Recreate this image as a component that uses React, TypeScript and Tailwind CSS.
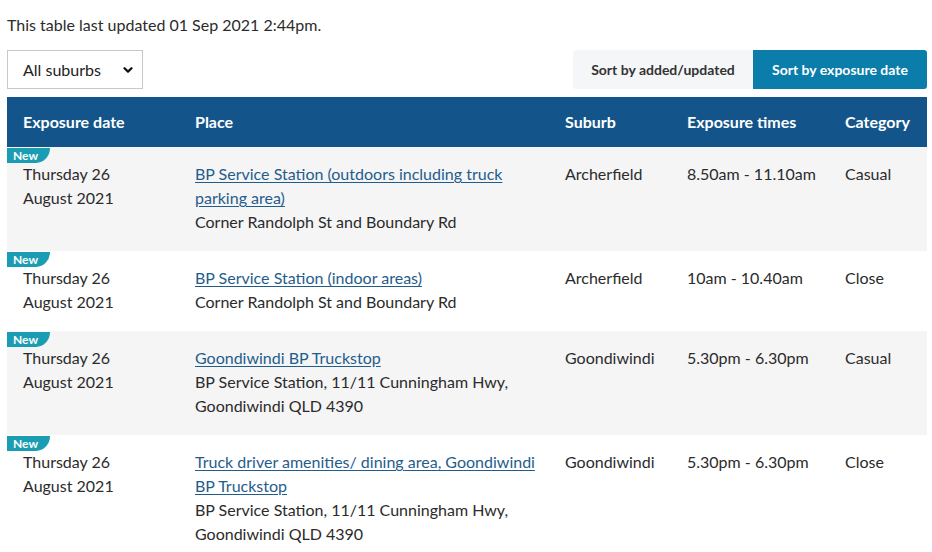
import React from "react";

type Row = {
  date: [string, string];
  link: string[];
  addr: string[];
  suburb: string;
  times: string;
  cat: string;
  gray: boolean;
};

const rows: Row[] = [
  {
    date: ["Thursday 26", "August 2021"],
    link: ["BP Service Station (outdoors including truck", "parking area)"],
    addr: ["Corner Randolph St and Boundary Rd"],
    suburb: "Archerfield",
    times: "8.50am - 11.10am",
    cat: "Casual",
    gray: true,
  },
  {
    date: ["Thursday 26", "August 2021"],
    link: ["BP Service Station (indoor areas)"],
    addr: ["Corner Randolph St and Boundary Rd"],
    suburb: "Archerfield",
    times: "10am - 10.40am",
    cat: "Close",
    gray: false,
  },
  {
    date: ["Thursday 26", "August 2021"],
    link: ["Goondiwindi BP Truckstop"],
    addr: ["BP Service Station, 11/11 Cunningham Hwy,", "Goondiwindi QLD 4390"],
    suburb: "Goondiwindi",
    times: "5.30pm - 6.30pm",
    cat: "Casual",
    gray: true,
  },
  {
    date: ["Thursday 26", "August 2021"],
    link: ["Truck driver amenities/ dining area, Goondiwindi", "BP Truckstop"],
    addr: ["BP Service Station, 11/11 Cunningham Hwy,", "Goondiwindi QLD 4390"],
    suburb: "Goondiwindi",
    times: "5.30pm - 6.30pm",
    cat: "Close",
    gray: false,
  },
];

const grid = "grid grid-cols-[172px_370px_122px_158px_98px]";

export default function App() {
  return (
    <div
      className="w-[932px] h-[552px] overflow-hidden bg-white text-[#2b2b2b] text-[16px] leading-[24px]"
      style={{ fontFamily: "Lato, 'Noto Sans', sans-serif" }}
    >
      <div className="pl-[7px] pr-[5px] pt-[13px]">
        <p>This table last updated 01 Sep 2021 2:44pm.</p>
        <div className="mt-[13px] flex items-center justify-between">
          <div className="flex h-[39px] w-[136px] items-center justify-between border border-[#c8c8c8] bg-white pl-[15px] pr-[9px] text-[16px] text-[#222]">
            <span>All suburbs</span>
            <svg width="10" height="8" viewBox="0 0 10 8">
              <path d="M1.5 2.2 L5 5.6 L8.5 2.2" fill="none" stroke="#111" strokeWidth="2.2" strokeLinecap="round" strokeLinejoin="round" />
            </svg>
          </div>
          <div className="flex h-[39px] text-[14px] font-bold">
            <div className="flex w-[180px] items-center justify-center rounded-l-[3px] bg-[#f5f6f8] text-[#333]">
              Sort by added/updated
            </div>
            <div className="flex w-[174px] items-center justify-center rounded-r-[3px] bg-[#0a7dab] text-white">
              Sort by exposure date
            </div>
          </div>
        </div>
        <div className="mt-[8px] w-[920px]">
          <div className={`${grid} h-[50px] items-center bg-[#13558a] font-bold text-white`}>
            <div className="pl-[16px]">Exposure date</div>
            <div className="pl-[16px]">Place</div>
            <div className="pl-[16px]">Suburb</div>
            <div className="pl-[16px]">Exposure times</div>
            <div className="pl-[16px]">Category</div>
          </div>
          {rows.map((r, i) => (
            <div key={i} className={`relative ${grid} pt-[15px] pb-[17px] ${r.gray ? "bg-[#f5f5f6]" : "bg-white"}`}>
              <div className="absolute left-0 top-[1px] flex h-[15px] w-[43px] items-center rounded-br-[14px_15px] bg-[#1a9db2] pl-[6px] text-[12px] font-bold leading-none text-white">
                New
              </div>
              <div className="pl-[16px]">
                <div>{r.date[0]}</div>
                <div>{r.date[1]}</div>
              </div>
              <div className="pl-[16px]">
                {r.link.map((l, j) => (
                  <div key={j}>
                    <a className="text-[#1f5d8c] underline underline-offset-[2px]" href="#">
                      {l}
                    </a>
                  </div>
                ))}
                {r.addr.map((a, j) => (
                  <div key={j}>{a}</div>
                ))}
              </div>
              <div className="pl-[16px]">{r.suburb}</div>
              <div className="pl-[16px]">{r.times}</div>
              <div className="pl-[16px]">{r.cat}</div>
            </div>
          ))}
        </div>
      </div>
    </div>
  );
}
